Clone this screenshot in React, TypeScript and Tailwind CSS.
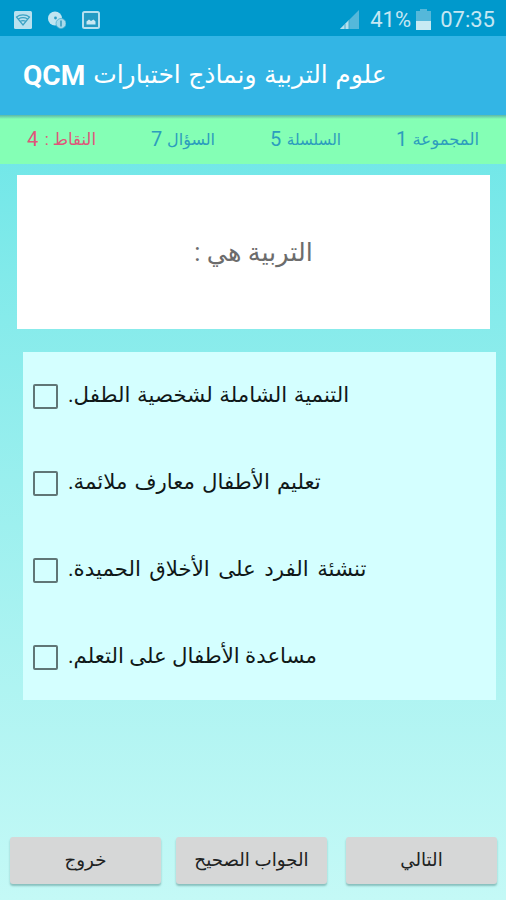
const stats = [
  { label: "المجموعة", value: "1", color: "text-[#2c9dbd]", box: "w-[83px]", size: "text-[16.5px]" },
  { label: "السلسلة", value: "5", color: "text-[#2c9dbd]", box: "w-[71px]", size: "text-[15.2px]" },
  { label: "السؤال", value: "7", color: "text-[#2c9dbd]", box: "w-[64px]", size: "text-[16px]" },
  { label: "النقاط :", value: "4", color: "text-[#e0557a]", box: "w-[69px]", size: "text-[16.5px]" },
]

const answers = [
  { text: "التنمية الشاملة لشخصية الطفل.", spacing: "[word-spacing:1.4px]" },
  { text: "تعليم الأطفال معارف ملائمة.", spacing: "[word-spacing:1.8px]" },
  { text: "تنشئة الفرد على الأخلاق الحميدة.", spacing: "[word-spacing:3.2px]" },
  { text: "مساعدة الأطفال على التعلم.", spacing: "" },
]

const buttons = [
  { label: "خروج", margin: "" },
  { label: "الجواب الصحيح", margin: "ml-[15px]" },
  { label: "التالي", margin: "ml-[19px]" },
]

function StatusBar() {
  return (
    <div className="flex h-9 items-center justify-between bg-[#0099cc] pt-[3px] pr-[11px] pl-3.5 text-[#c5e7f3]">
      <div className="flex items-center">
        {/* Wi-Fi */}
        <svg width="18" height="18" viewBox="0 0 18 18">
          <rect width="18" height="18" rx="1.5" fill="#b9e1ef" />
          <g fill="none" stroke="#3ba2c4" strokeWidth="1.2">
            <path d="M2.5 6C6 3.2 12 3.2 15.5 6L9 14Z" />
            <path d="M4.3 8C7 6.5 11 6.5 13.7 8M6.2 10.3C8 9.4 10 9.4 11.8 10.3" />
          </g>
        </svg>
        {/* Disc with a badge */}
        <svg className="ml-4" width="18" height="18" viewBox="0 0 18 18">
          <circle cx="7" cy="7.5" r="7" fill="#c0e5f1" />
          <circle cx="7.5" cy="7" r="1.4" fill="#2a9dc4" />
          <circle cx="13" cy="12.5" r="5" fill="#a8daeb" stroke="#4fb1d2" strokeWidth="0.8" />
          <path d="M13 9.5v6" stroke="#3599bb" strokeWidth="1.5" />
        </svg>
        {/* Picture */}
        <svg className="ml-4" width="18" height="18" viewBox="0 0 18 18">
          <rect x="1" y="1" width="16" height="16" rx="1.5" fill="#249bc3" stroke="#b5e0ef" strokeWidth="2" />
          <path d="M4.5 13.5V10.5L7 8.5L9 10L11.5 8.5L13.5 10.5V13.5Z" fill="#c8e8f3" />
        </svg>
      </div>
      <div className="flex items-center">
        <svg width="20" height="20" viewBox="0 0 20 20">
          <path d="M0 19L19 0V19Z" fill="#55b8da" />
          <path d="M0 19L9 10V19Z" fill="#b5e0ee" />
          <path d="M5 14v5M9 10v9" stroke="#44aacb" strokeWidth="1" />
        </svg>
        <span className="ml-2.5 w-[42px] text-[22px] leading-5 whitespace-nowrap">41%</span>
        <svg className="ml-1" width="15" height="21" viewBox="0 0 15 21">
          <path d="M4 0H11V2H15V21H0V2H4Z" fill="#55b8da" />
          <path d="M0 12H15V21H0Z" fill="#c7eaf3" />
        </svg>
        <span className="ml-[9px] text-[22px] leading-5">07:35</span>
      </div>
    </div>
  )
}

function Stats() {
  return (
    <div
      dir="rtl"
      className="flex h-[49px] justify-between bg-linear-to-b from-[#5cb7a8] to-[#84ffb5] to-[4px] px-[27px] pt-3 leading-6"
    >
      {stats.map((stat) => (
        <div key={stat.label} className={`flex items-baseline justify-between whitespace-nowrap ${stat.box} ${stat.color}`}>
          <span className={`relative -top-px ${stat.size}`}>{stat.label}</span>
          <span className="text-[20px]">{stat.value}</span>
        </div>
      ))}
    </div>
  )
}

export default function App() {
  return (
    <div className="flex h-[900px] w-[506px] flex-col overflow-hidden bg-linear-to-b from-[#5be3e5] to-[#c4f9f6] font-[Roboto,'DejaVu_Sans',sans-serif]">
      <StatusBar />
      <header dir="rtl" className="flex h-[79px] items-center justify-end bg-[#33b5e5] pl-[23px] text-white">
        <h1 className="flex items-baseline text-[25px] whitespace-nowrap [word-spacing:1.2px]">
          <span className="relative -top-0.5">علوم التربية ونماذج اختبارات</span>
          <span className="mr-2 text-[28px] font-bold">QCM</span>
        </h1>
      </header>
      <Stats />

      <main className="flex flex-1 flex-col">
        <section
          dir="rtl"
          className="mt-[11px] ml-[17px] flex h-[154px] w-[473px] items-center justify-center bg-white text-[25.5px] text-[#6c6c6c]"
        >
          التربية هي :
        </section>

        <section className="mt-[23px] ml-[23px] flex h-[348px] w-[473px] flex-col bg-[#d4ffff]">
          {answers.map((answer) => (
            <label key={answer.text} className="flex h-[87px] items-center pt-px pl-2.5 text-[21.3px] text-[#101818]">
              <span className="size-[25px] shrink-0 rounded-[2px] border-2 border-[#607676]" />
              <span dir="rtl" className={`ml-2.5 pb-0.5 whitespace-nowrap ${answer.spacing}`}>
                {answer.text}
              </span>
            </label>
          ))}
        </section>

        <div className="mt-auto mb-4 ml-2.5 flex">
          {buttons.map((button) => (
            <button
              key={button.label}
              dir="rtl"
              className={`h-[47px] w-[151px] rounded-[3px] bg-[#d6d7d7] pb-0.5 text-[18.3px] text-[#202222] shadow-[0_2px_2px_rgba(0,60,60,0.3)] ${button.margin}`}
            >
              {button.label}
            </button>
          ))}
        </div>
      </main>
    </div>
  )
}
